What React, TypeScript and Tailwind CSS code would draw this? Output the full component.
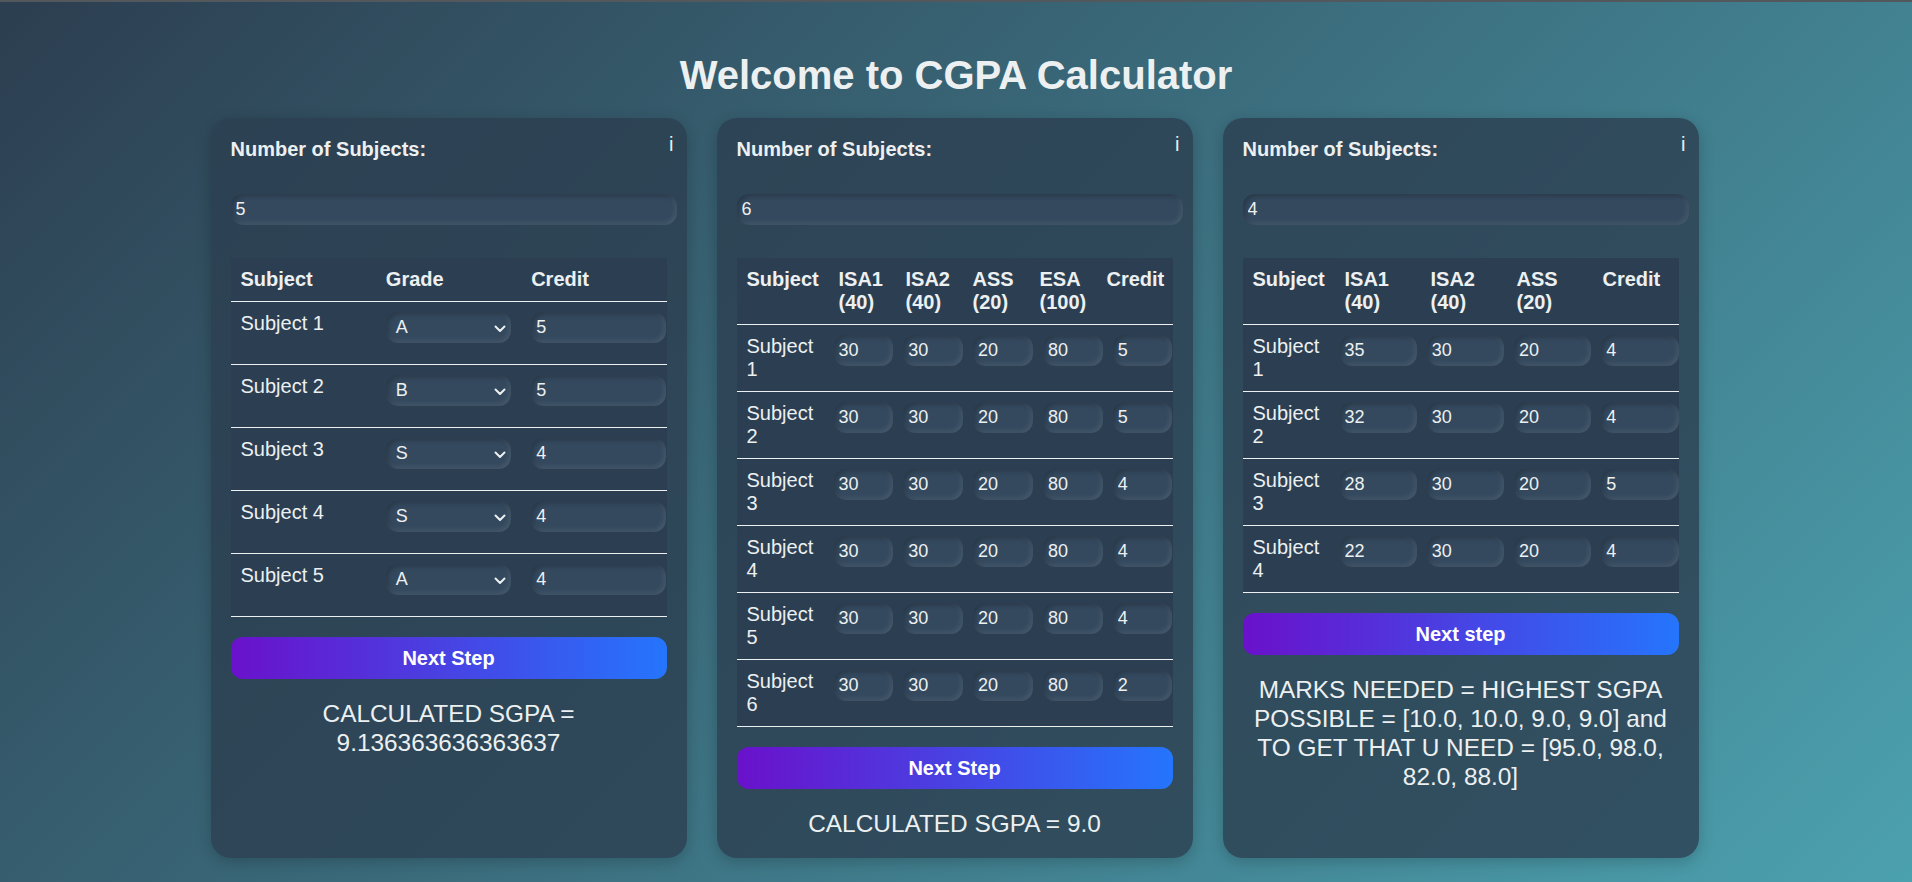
import React from 'react'

const field =
  'h-[31px] rounded-[12px] bg-[#34495e] px-[5px] text-[18px] text-[#ecf0f1] outline-none shadow-[inset_2px_2px_5px_rgba(0,0,0,0.25),inset_-2px_-2px_5px_rgba(255,255,255,0.1)]'

const card1 = [
  { grade: 'A', credit: '5' },
  { grade: 'B', credit: '5' },
  { grade: 'S', credit: '4' },
  { grade: 'S', credit: '4' },
  { grade: 'A', credit: '4' },
]

const card2 = [
  ['30', '30', '20', '80', '5'],
  ['30', '30', '20', '80', '5'],
  ['30', '30', '20', '80', '4'],
  ['30', '30', '20', '80', '4'],
  ['30', '30', '20', '80', '4'],
  ['30', '30', '20', '80', '2'],
]

const card3 = [
  ['35', '30', '20', '4'],
  ['32', '30', '20', '4'],
  ['28', '30', '20', '5'],
  ['22', '30', '20', '4'],
]

function Chevron() {
  return (
    <svg width="12" height="8" viewBox="0 0 12 8" className="pointer-events-none absolute right-[5px] top-[13px]">
      <polyline points="1.5,1.5 6,6 10.5,1.5" fill="none" stroke="#ecf0f1" strokeWidth="2" strokeLinecap="round" strokeLinejoin="round" />
    </svg>
  )
}

function Card({ count, children }: { count: string; children: React.ReactNode }) {
  return (
    <div className="relative flex w-[476px] flex-col rounded-[20px] bg-[rgba(44,62,80,0.8)] p-[20px] shadow-[0_4px_15px_rgba(0,0,0,0.2)]">
      <span className="absolute right-[13px] top-[15px] text-[20px] leading-[23px]">i</span>
      <label className="block text-[20px] font-bold leading-[23px]">Number of Subjects:</label>
      <input readOnly value={count} className={`${field} mt-[33px] w-[calc(100%+10px)]`} />
      {children}
    </div>
  )
}

function NextButton({ label }: { label: string }) {
  return (
    <button className="mt-[20px] h-[42px] w-full rounded-[12px] bg-[linear-gradient(to_right,#6a11cb,#2575fc)] text-[20px] font-bold text-white">
      {label}
    </button>
  )
}

function Head({ lines }: { lines: string[] }) {
  return (
    <div className="py-[10px] pl-[10px] text-[20px] font-bold leading-[23px]">
      {lines.map(l => (
        <div key={l}>{l}</div>
      ))}
    </div>
  )
}

export default function App() {
  return (
    <div className="min-h-screen w-full bg-[linear-gradient(135deg,#2c3e50,#4ca1af)] font-['Liberation_Sans',Arial,sans-serif] text-[#ecf0f1]">
      <div className="h-[2px] bg-[#53585d]" />
      <h1 className="pt-[50px] text-center text-[40px] font-bold leading-[46px]">Welcome to CGPA Calculator</h1>

      <div className="mt-[20px] flex justify-center gap-[30px] pr-[3px]">
        {/* grade based */}
        <Card count="5">
          <div className="mt-[33px] bg-[#2c3f52]">
            <div className="grid grid-cols-3 border-b border-[#ecf0f1]">
              <Head lines={['Subject']} />
              <Head lines={['Grade']} />
              <Head lines={['Credit']} />
            </div>
            {card1.map((r, i) => (
              <div key={i} className="grid grid-cols-3 border-b border-[#ecf0f1]">
                <div className="p-[10px] text-[20px] leading-[23px]">Subject {i + 1}</div>
                <div className="p-[10px]">
                  <div className="relative mb-[11px]">
                    <div className={`${field} flex w-full items-center pl-[10px]`}>{r.grade}</div>
                    <Chevron />
                  </div>
                </div>
                <div className="p-[10px]">
                  <input readOnly value={r.credit} className={`${field} w-[calc(100%+10px)]`} />
                </div>
              </div>
            ))}
          </div>
          <NextButton label="Next Step" />
          <p className="mt-[20px] text-center text-[24.4px] leading-[29px]">CALCULATED SGPA = 9.136363636363637</p>
        </Card>

        {/* marks based */}
        <Card count="6">
          <div className="mt-[33px] bg-[#2c3f52]">
            <div className="grid grid-cols-[92px_67px_67px_67px_67px_77px] border-b border-[#ecf0f1]">
              <Head lines={['Subject']} />
              <Head lines={['ISA1', '(40)']} />
              <Head lines={['ISA2', '(40)']} />
              <Head lines={['ASS', '(20)']} />
              <Head lines={['ESA', '(100)']} />
              <Head lines={['Credit']} />
            </div>
            {card2.map((r, i) => (
              <div key={i} className="grid grid-cols-[87px_repeat(5,1fr)] items-start gap-x-[10px] border-b border-[#ecf0f1] py-[10px]">
                <div className="pl-[10px] text-[20px] leading-[23px]">Subject {i + 1}</div>
                {r.map((v, j) => (
                  <input key={j} readOnly value={v} className={`${field} w-full`} />
                ))}
              </div>
            ))}
          </div>
          <NextButton label="Next Step" />
          <p className="mt-[20px] text-center text-[24.4px] leading-[29px]">CALCULATED SGPA = 9.0</p>
        </Card>

        {/* target marks */}
        <Card count="4">
          <div className="mt-[33px] bg-[#2c3f52]">
            <div className="grid grid-cols-[92px_repeat(4,1fr)] border-b border-[#ecf0f1]">
              <Head lines={['Subject']} />
              <Head lines={['ISA1', '(40)']} />
              <Head lines={['ISA2', '(40)']} />
              <Head lines={['ASS', '(20)']} />
              <Head lines={['Credit']} />
            </div>
            {card3.map((r, i) => (
              <div key={i} className="grid grid-cols-[87px_repeat(4,1fr)] items-start gap-x-[10px] border-b border-[#ecf0f1] py-[10px]">
                <div className="pl-[10px] text-[20px] leading-[23px]">Subject {i + 1}</div>
                {r.map((v, j) => (
                  <input key={j} readOnly value={v} className={`${field} w-full`} />
                ))}
              </div>
            ))}
          </div>
          <NextButton label="Next step" />
          <p className="mt-[20px] text-center text-[24.4px] leading-[29px]">
            MARKS NEEDED = HIGHEST SGPA POSSIBLE = [10.0, 10.0, 9.0, 9.0] and TO GET THAT U NEED = [95.0, 98.0, 82.0, 88.0]
          </p>
        </Card>
      </div>
    </div>
  )
}
